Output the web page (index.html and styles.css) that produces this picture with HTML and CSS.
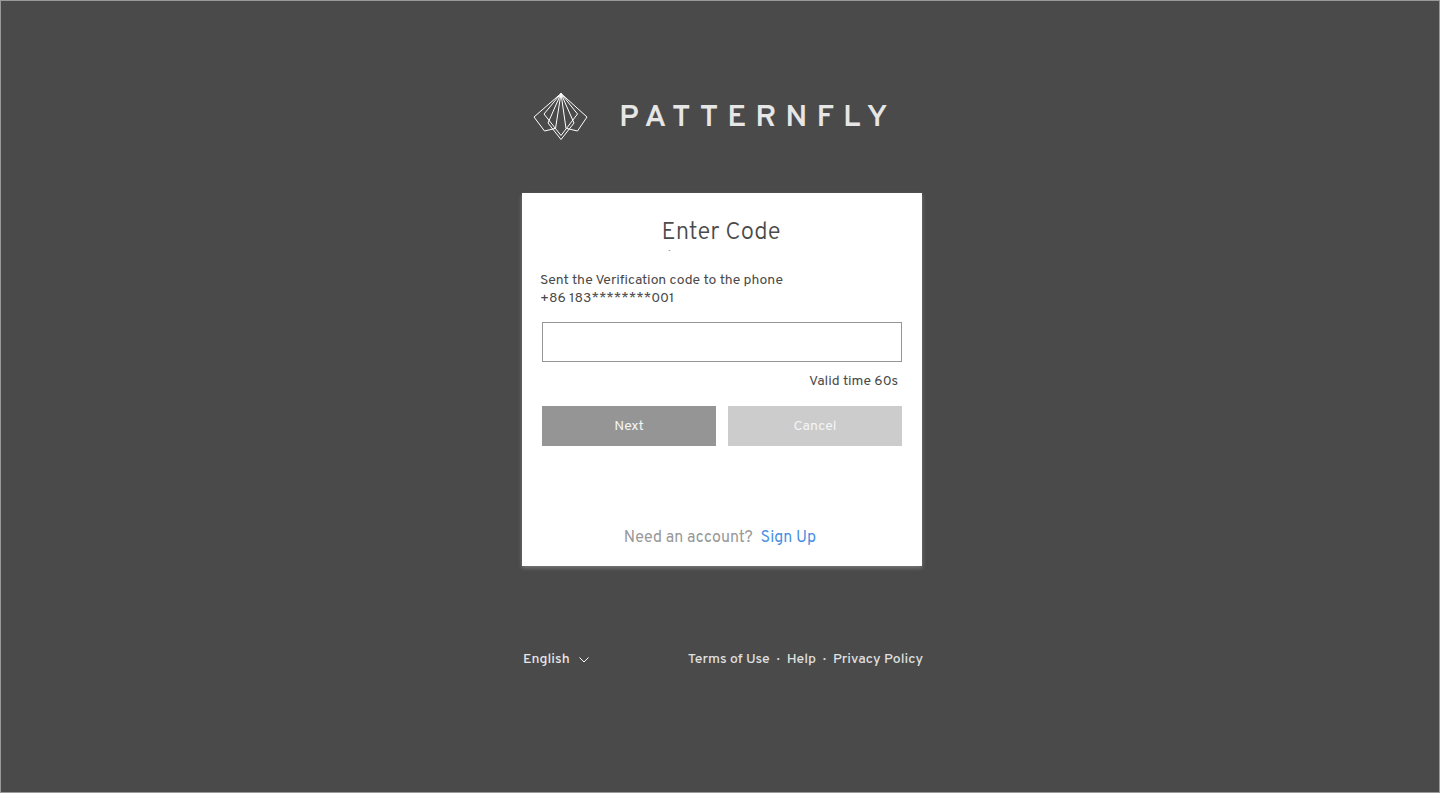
FILE: index.html
```html
<!DOCTYPE html>
<html lang="en">
<head>
<meta charset="utf-8">
<title>PatternFly – Enter Code</title>
<link rel="stylesheet" href="styles.css">
</head>
<body>
<div class="page">
  <header class="brand">
    <svg class="brand-mark" viewBox="0 0 56 50" aria-hidden="true">
      <path d="M28 2.500 1 26 11.500 40 22 37.500M28 2.500 54 26 44.500 40 34 37.500"/>
      <path d="M28 2.500 11 23 28 44.500 44.500 23Z"/>
      <path d="M28 2.500 15 32 28 48.500 41 32Z"/>
      <path d="M28 2.500 22.500 37.500M28 2.500 33 37.500"/>
    </svg>
    <span class="brand-name">PATTERNFLY</span>
  </header>
  <main class="card">
    <h1 class="title">Enter Code</h1>
    <p class="tick">`</p>
    <form class="form">
      <label class="message" for="code">Sent the Verification code to the phone<br>+86 183********001</label>
      <input class="code" id="code" type="text" inputmode="numeric">
      <p class="valid">Valid time 60s</p>
      <div class="actions">
        <button class="button next" type="submit">Next</button>
        <button class="button cancel" type="button">Cancel</button>
      </div>
    </form>
    <p class="signup">Need an account? <a class="signup-link" href="#signup">Sign Up</a></p>
  </main>
  <footer class="footer">
    <div class="language">
      <select class="language-select" aria-label="Language"><option>English</option></select>
      <svg class="chevron" viewBox="0 0 10 6" aria-hidden="true"><path d="M.5.5 5 5 9.500.5"/></svg>
    </div>
    <nav class="links">
      <a href="#terms">Terms of Use</a><span class="dot">·</span><a href="#help">Help</a><span class="dot">·</span><a href="#privacy">Privacy Policy</a>
    </nav>
  </footer>
</div>
</body>
</html>
```
FILE: styles.css
```css
* { box-sizing: border-box; }
body { margin: 0; background: #4a4a4a; color: #4a4a4a; font: 14px/18px Overpass, Roboto, sans-serif; }
h1, p { margin: 0; }
.page { min-height: 100vh; padding: 90px 16px 32px 20px; border: 1px solid #999; display: flex; flex-direction: column; align-items: center; }
.brand, .card, .footer { width: 100%; max-width: 400px; }
.brand { display: flex; align-items: center; gap: 30px; padding-left: 11px; height: 50px; }
.brand-mark { width: 56px; height: 50px; flex: none; fill: none; stroke: #fff; stroke-width: 1; stroke-linejoin: round; }
.brand-name { padding-top: 6px; color: #e6e6e6; font-size: 31px; line-height: 50px; font-weight: 600; letter-spacing: 9px; }
.card { margin-top: 52px; padding: 24px 20px 16px; background: #fff; box-shadow: 0 2px 4px rgba(153, 153, 153, .6); }
.title { padding-right: 2px; font-size: 24px; line-height: 32px; font-weight: 300; text-align: center; }
.tick { height: 8px; padding-left: 126px; font-size: 8px; line-height: 8px; }
.form { margin-top: 15px; }
.message { display: block; margin-left: -2px; }
.code { display: block; width: 100%; height: 40px; margin-top: 14px; padding: 0 12px; border: 1px solid #959595; background: #fff; font: inherit; color: inherit; }
.valid { margin-top: 11px; padding-right: 4px; text-align: right; }
.actions { display: grid; grid-template-columns: 1fr 1fr; gap: 12px; margin-top: 15px; }
.button { height: 40px; border: 0; padding: 2px 0 0; color: #f5f5f5; font: inherit; }
.next { background: #959595; }
.cancel { background: #ccc; }
.signup { margin-top: 80px; padding-right: 4px; color: #999; font-size: 16px; line-height: 24px; text-align: center; }
.signup-link { margin-left: 4px; color: #4a90e2; text-decoration: none; }
.footer { display: flex; justify-content: space-between; align-items: center; max-width: 402px; margin-top: 85px; color: #e0e0e0; }
.language { display: flex; align-items: center; gap: 9px; padding-left: 2px; }
.language-select { appearance: none; border: 0; padding: 0; background: none; color: #e6e6e6; font: inherit; font-weight: 500; }
.chevron { width: 10px; height: 6px; fill: none; stroke: #fff; }
.links { display: flex; gap: 6px; font-weight: 500; }
.links a { color: inherit; text-decoration: none; }
.dot { width: 5px; text-align: center; font-family: Roboto, sans-serif; line-height: 16px; }
```
